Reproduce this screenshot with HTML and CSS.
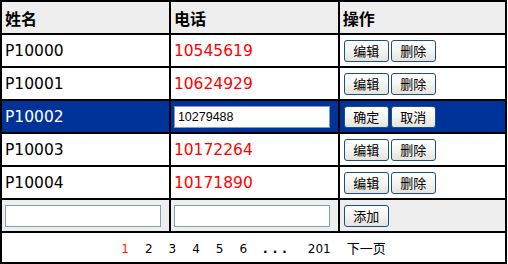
FILE: index.html
```html
<!DOCTYPE html>
<html>
<head>
<meta charset="utf-8">
<link rel="stylesheet" href="styles.css">
</head>
<body>
<table class="grid">
  <tr class="head">
    <th class="c1">姓名</th><th class="c2">电话</th><th class="c3">操作</th>
  </tr>
  <tr>
    <td>P10000</td><td class="phone">10545619</td>
    <td><button class="btn">编辑</button><button class="btn">删除</button></td>
  </tr>
  <tr>
    <td>P10001</td><td class="phone">10624929</td>
    <td><button class="btn">编辑</button><button class="btn">删除</button></td>
  </tr>
  <tr class="sel">
    <td>P10002</td><td><input class="field" type="text" value="10279488"></td>
    <td><button class="btn">确定</button><button class="btn">取消</button></td>
  </tr>
  <tr>
    <td>P10003</td><td class="phone">10172264</td>
    <td><button class="btn">编辑</button><button class="btn">删除</button></td>
  </tr>
  <tr>
    <td>P10004</td><td class="phone">10171890</td>
    <td><button class="btn">编辑</button><button class="btn">删除</button></td>
  </tr>
  <tr class="add">
    <td><input class="field" type="text"></td>
    <td><input class="field" type="text"></td>
    <td><button class="btn">添加</button></td>
  </tr>
  <tr class="pager">
    <td colspan="3">
      <span class="pg cur">1</span><span class="pg">2</span><span class="pg">3</span><span class="pg">4</span><span class="pg">5</span><span class="pg">6</span><span class="pg dots">...</span><span class="pg">201</span><span class="pg next">下一页</span>
    </td>
  </tr>
</table>
</body>
</html>
```

FILE: styles.css
```css
html, body {
  margin: 0;
  padding: 0;
  background: #fff;
}
.grid {
  border-collapse: collapse;
  width: 507px;
  font-family: "DejaVu Sans", "Noto Sans CJK SC", sans-serif;
  font-size: 15.5px;
  color: #000;
}
.grid th, .grid td {
  border: 2px solid #000;
  height: 33px;
  padding: 0 0 0 3px;
  text-align: left;
  vertical-align: middle;
  box-sizing: border-box;
}
.c1 { width: 169px; }
.c2 { width: 169px; }
.c3 { width: 169px; }
.head th {
  background: #eeeeee;
  font-family: "Noto Sans CJK SC", sans-serif;
  font-weight: bold;
  font-size: 16px;
}
.phone { color: #ff0000; }
.sel td {
  background: #003399;
  color: #fff;
}
.add td { background: #eeeeee; }
.btn {
  box-sizing: border-box;
  width: 45px;
  height: 22px;
  margin: 0 3px 0 1px;
  padding: 0;
  border: 1px solid #1c4f7c;
  border-radius: 3px;
  background: linear-gradient(#ffffff, #f4f4f0 50%, #e4e3dc);
  font-family: "Noto Sans CJK SC", sans-serif;
  font-size: 13px;
  color: #000;
  vertical-align: middle;
}
.btn + .btn { margin-left: -1px; }
.field {
  box-sizing: border-box;
  width: 156px;
  height: 22px;
  margin: 0;
  padding: 1px 3px;
  border: 1px solid #7f9db9;
  background: #fff;
  font-family: "Liberation Sans", Arial, sans-serif;
  font-size: 12.5px;
  color: #000;
  vertical-align: middle;
}
.pager td {
  text-align: center;
  padding: 0;
  height: 31px;
  font-size: 12px;
}
.pg {
  margin: 0 8px;
  color: #000;
}
.pg.cur { color: #ff2200; }
.pg.dots { letter-spacing: 5px; font-weight: bold; }
.pg.next { font-family: "Noto Sans CJK SC", sans-serif; font-size: 13px; }
```
